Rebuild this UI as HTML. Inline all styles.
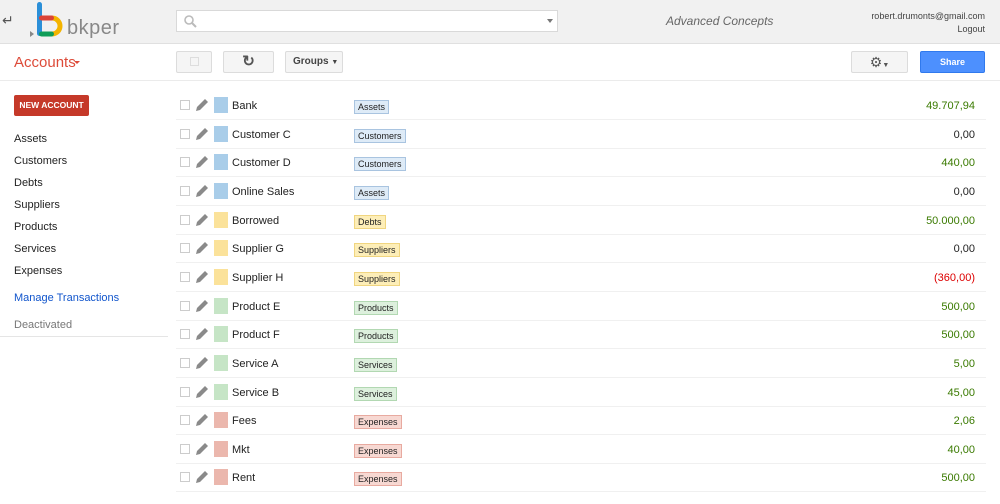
<!DOCTYPE html>
<html><head><meta charset="utf-8"><style>
*{box-sizing:border-box}
body{margin:0;width:1000px;height:504px;overflow:hidden;font-family:"Liberation Sans",Arial,sans-serif;background:#fff;position:relative;color:#222}
.abs{position:absolute}
#hdr{left:0;top:0;width:1000px;height:44px;background:#f1f1f1;border-bottom:1px solid #e0e0e0}
.btn{position:absolute;background:#f5f5f5;border:1px solid #dcdcdc;border-radius:2px;height:22px;top:51px}
.side{position:absolute;left:14px;font-size:11px;color:#222}
.row{position:absolute;left:176px;width:810px;height:29px;border-bottom:1px solid #f0f0f0}
.cb{position:absolute;left:4px;top:9px;width:10px;height:10px;border:1px solid #ccc;background:#fff}
.pen{position:absolute;left:19px;top:7px}
.sq{position:absolute;left:38px;top:6px;width:14px;height:16px}
.nm{position:absolute;left:56px;top:9px;font-size:11px}
.tag{position:absolute;left:178px;top:9px;font-size:9px;padding:1px 3px;border:1px solid;line-height:10px}
.amt{position:absolute;right:11px;top:9px;font-size:11px;color:#3a7a00}
.b{background:#a9cde9}.y{background:#fbe29a}.g{background:#c6e5c6}.r{background:#ebb7ad}
.tb{background:#deebf7;border-color:#a9c4e0}
.ty{background:#fdeeb8;border-color:#f0d580}
.tg{background:#ddf0dd;border-color:#b2d8b2}
.tr{background:#f7d8d2;border-color:#e8aaa0}
</style></head><body>
<div id="hdr" class="abs"></div>
<div class="abs" style="left:2px;top:12px;font-size:14px;color:#555">&#8629;</div>
<svg class="abs" style="left:28px;top:0" width="42" height="40" viewBox="0 0 42 40">
<rect x="9" y="2" width="5" height="34" rx="2.5" fill="#2b8fd8"/>
<path d="M14 18 h10 a8 8 0 0 1 0 16 h-10" fill="none" stroke="#f4b400" stroke-width="5"/>
<rect x="11" y="15.5" width="15" height="5" rx="2.5" fill="#db4437"/>
<rect x="11" y="31.5" width="15" height="5" rx="2.5" fill="#0f9d58"/>
<path d="M2 31 l4 3 l-4 3z" fill="#888"/>
</svg>
<div class="abs" style="left:67px;top:17px;font-size:20px;color:#888;letter-spacing:0.5px">bkper</div>
<div class="abs" style="left:176px;top:10px;width:382px;height:22px;background:#fff;border:1px solid #d9d9d9"></div>
<svg class="abs" style="left:183px;top:14px" width="14" height="14"><circle cx="6" cy="6" r="4" fill="none" stroke="#bbb" stroke-width="1.6"/><line x1="9" y1="9" x2="13" y2="13" stroke="#bbb" stroke-width="2"/></svg>
<div class="abs" style="left:547px;top:19px;border:3.5px solid transparent;border-top:4px solid #777"></div>
<div class="abs" style="left:666px;top:14px;font-size:12px;font-style:italic;color:#666">Advanced Concepts</div>
<div class="abs" style="right:15px;top:10px;font-size:9px;color:#444;text-align:right;line-height:13px">robert.drumonts@gmail.com<br>Logout</div>
<div class="abs" style="left:0;top:80px;width:1000px;height:1px;background:#ebebeb"></div>
<div class="abs" style="left:14px;top:54px;font-size:15px;color:#dd4b39">Accounts</div>
<div class="abs" style="left:74px;top:61px;border:3px solid transparent;border-top:3.5px solid #dd4b39"></div>
<div class="btn" style="left:176px;width:36px"><div style="position:absolute;left:13px;top:5px;width:9px;height:9px;border:1px solid #ddd"></div></div>
<div class="btn" style="left:223px;width:51px;text-align:center;font-size:15px;font-weight:bold;color:#555;line-height:20px">&#8635;</div>
<div class="btn" style="left:285px;width:58px;font-size:10px;font-weight:bold;color:#444;padding:4px 0 0 7px">Groups <span style="font-size:7px">&#9660;</span></div>
<div class="btn" style="left:851px;width:57px;text-align:center;font-size:14px;color:#555;line-height:20px">&#9881;<span style="font-size:7px">&#9660;</span></div>
<div class="abs" style="left:920px;top:51px;width:65px;height:22px;background:#4d90fe;border:1px solid #3079ed;border-radius:2px;color:#fff;font-size:9px;font-weight:bold;text-align:center;line-height:20px">Share</div>
<div class="abs" style="left:14px;top:95px;width:75px;height:21px;background:#c53929;border-radius:2px;color:#fff;font-size:8.5px;font-weight:bold;text-align:center;line-height:21px">NEW ACCOUNT</div>
<div class="side" style="top:133px">Assets</div>
<div class="side" style="top:155px">Customers</div>
<div class="side" style="top:177px">Debts</div>
<div class="side" style="top:199px">Suppliers</div>
<div class="side" style="top:221px">Products</div>
<div class="side" style="top:243px">Services</div>
<div class="side" style="top:265px">Expenses</div>
<div class="side" style="top:292px;color:#1155cc">Manage Transactions</div>
<div class="side" style="top:319px;color:#777">Deactivated</div>
<div class="abs" style="left:0;top:336px;width:168px;height:1px;background:#e5e5e5"></div>
<div id="rows"></div>
<script>
const d=[["Bank","b","Assets","49.707,94",1],["Customer C","b","Customers","0,00",0],["Customer D","b","Customers","440,00",1],["Online Sales","b","Assets","0,00",0],["Borrowed","y","Debts","50.000,00",1],["Supplier G","y","Suppliers","0,00",0],["Supplier H","y","Suppliers","(360,00)",2],["Product E","g","Products","500,00",1],["Product F","g","Products","500,00",1],["Service A","g","Services","5,00",1],["Service B","g","Services","45,00",1],["Fees","r","Expenses","2,06",1],["Mkt","r","Expenses","40,00",1],["Rent","r","Expenses","500,00",1]];
let h="";d.forEach((r,i)=>{const t=91+i*28.65;const c=["#222","#3a7a00","#dd0000"][r[4]];
h+=`<div class="row" style="top:${t}px"><div class="cb"></div><svg class="pen" width="14" height="14" viewBox="0 0 14 14"><path d="M1 13 L2 9 L10 1 L13 4 L5 12 Z" fill="#8a8a8a"/></svg><div class="sq ${r[1]}"></div><div class="nm">${r[0]}</div><div class="tag t${r[1]}">${r[2]}</div><div class="amt" style="color:${c}">${r[3]}</div></div>`;});
document.getElementById("rows").innerHTML=h;
</script>
</body></html>
